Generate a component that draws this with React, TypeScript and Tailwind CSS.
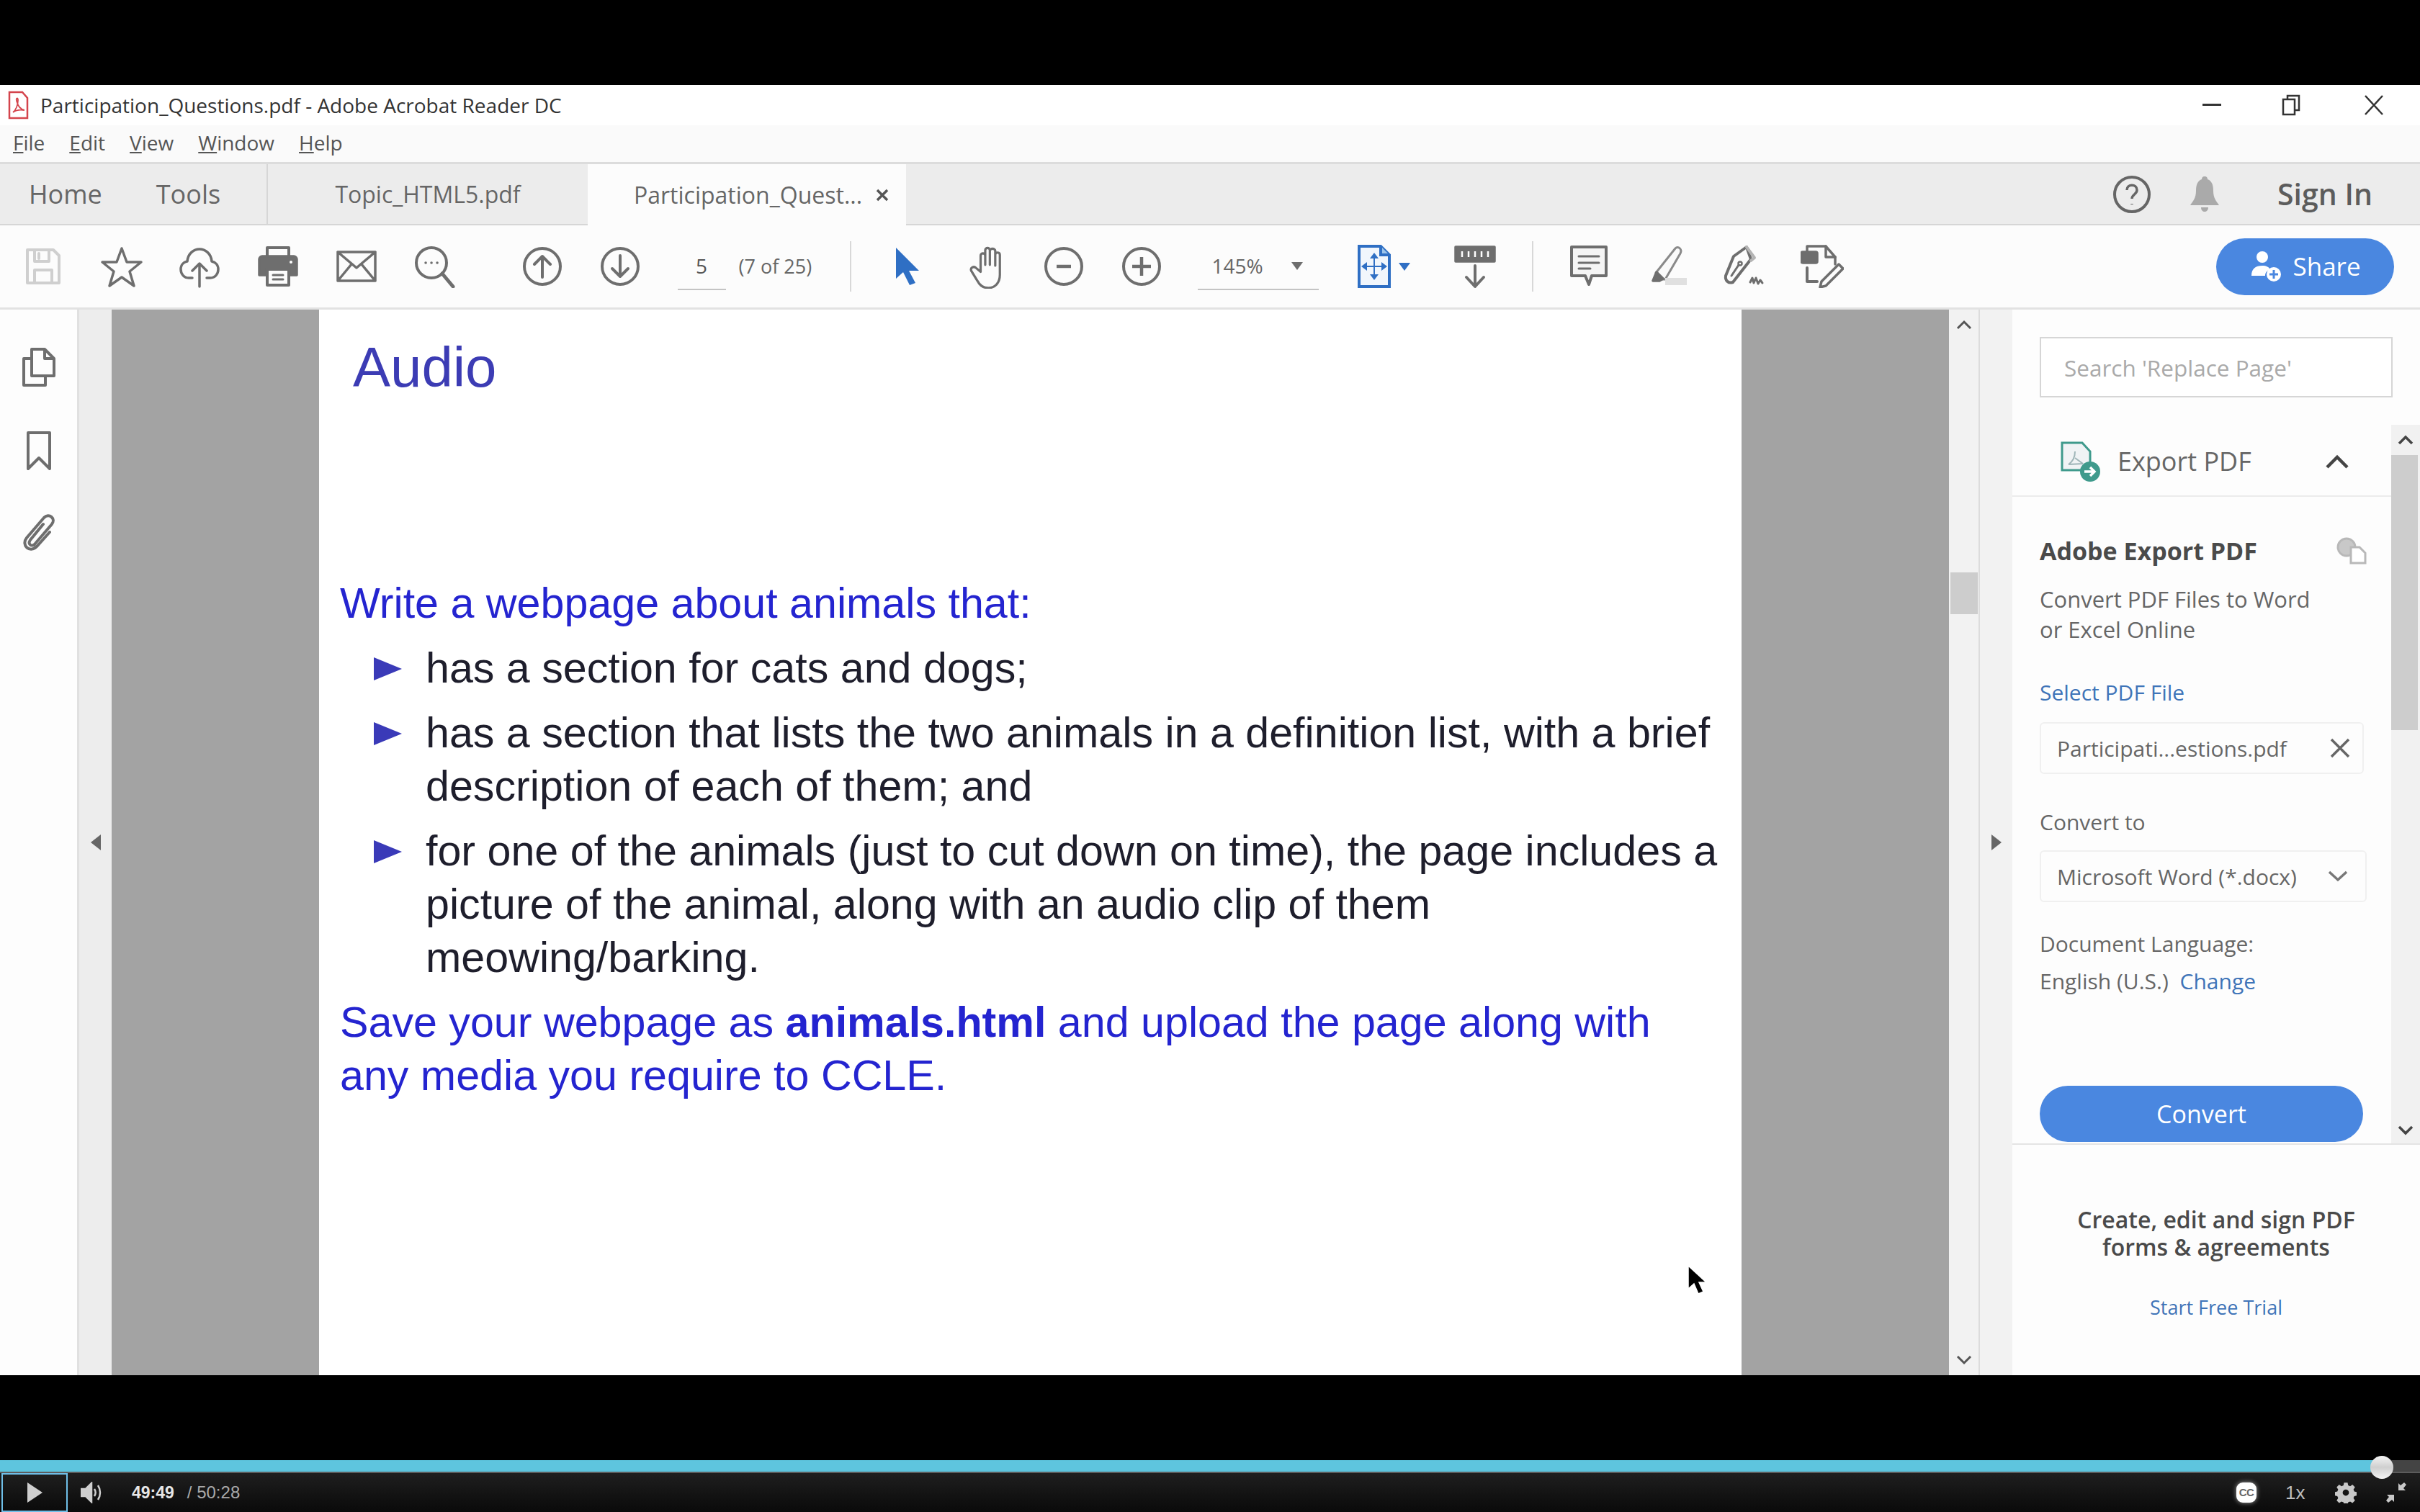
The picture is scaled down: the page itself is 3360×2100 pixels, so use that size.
import type { ReactNode } from "react";

const G = "#6e6e6e";

function Ico({ w = 60, h = 60, vb, children }: { w?: number; h?: number; vb?: string; children: ReactNode }) {
  return (
    <svg width={w} height={h} viewBox={vb ?? `0 0 ${w} ${h}`} fill="none" stroke={G} strokeWidth={3.5} strokeLinejoin="round" strokeLinecap="round">
      {children}
    </svg>
  );
}

function Slot({ children, className = "w-[108px]" }: { children: ReactNode; className?: string }) {
  return <div className={`flex shrink-0 items-center justify-center ${className}`}>{children}</div>;
}

function SaveIcon() {
  return (
    <Ico>
      <g stroke="#cfcfcf" strokeWidth={4}>
        <path d="M8 7h36l8 8v38H8z" />
        <path d="M18 7v16h20V7M18 53V35h24v18M24 12v7" />
      </g>
    </Ico>
  );
}
function StarIcon() {
  return <Ico><path d="M30 5l7 19h20L41 37l6 20-17-12-17 12 6-20L3 24h20z" /></Ico>;
}
function CloudIcon() {
  return <Ico><path d="M20 46H15C8 46 4 40 4 34c0-6 4-10 9-11 1-11 9-17 17-17s16 6 17 17c5 1 9 5 9 11 0 6-4 12-11 12h-5M30 58V27M20 36l10-10 10 10" /></Ico>;
}
function PrintIcon() {
  return (
    <Ico>
      <path d="M15 16V4h30v12" strokeWidth={4} />
      <path d="M4 20c0-2 2-4 4-4h44c2 0 4 2 4 4v22H46v-8H14v8H4z" fill={G} stroke={G} />
      <path d="M15 34h30v22H15z" strokeWidth={4} />
      <path d="M23 42h14M23 48h14" strokeWidth={3} />
      <circle cx="48" cy="24" r="2" fill="#fff" stroke="none" />
    </Ico>
  );
}
function MailIcon() {
  return <Ico><path d="M4 10h52v40H4zM4 10l26 22 26-22M4 50l19-23M56 50L37 27" /></Ico>;
}
function SearchIcon() {
  return (
    <Ico>
      <circle cx="26" cy="25" r="21" strokeWidth={4} />
      <path d="M41 40l15 18" strokeWidth={5} />
      <path d="M18 25h.1M26 25h.1M34 25h.1" strokeWidth={3.5} />
    </Ico>
  );
}
function CircleArrow({ up }: { up: boolean }) {
  return (
    <Ico>
      <circle cx="30" cy="30" r="25" strokeWidth={4} />
      {up ? <path d="M30 45V17M19 27l11-11 11 11" strokeWidth={4} /> : <path d="M30 15v28M19 33l11 11 11-11" strokeWidth={4} />}
    </Ico>
  );
}
function PointerIcon() {
  return (
    <svg width="42" height="54" viewBox="0 0 42 54">
      <path d="M4 1l32 32H22l9 17-8 3-9-18-10 9z" fill="#2f6fc4" />
    </svg>
  );
}
function HandIcon() {
  return (
    <Ico w={56} h={62} vb="4 1 44 58">
      <path d="M19 37V16c0-4 6-4 6 0v12-19c0-4 6-4 6 0v19-18c0-4 7-4 7 0v19-14c0-4 6-4 6 0v26c0 10-6 17-15 17-7 0-11-3-14-9l-8-13c-2-4 3-7 6-4z" strokeWidth={3} />
    </Ico>
  );
}
function ZoomCircle({ plus }: { plus: boolean }) {
  return (
    <Ico>
      <circle cx="30" cy="30" r="25" strokeWidth={4} />
      <path d={plus ? "M17 30h26M30 17v26" : "M20 30h20"} strokeWidth={4.5} strokeLinecap="butt" />
    </Ico>
  );
}
function PageFitIcon() {
  return (
    <svg width="48" height="62" viewBox="0 0 48 62" fill="none" stroke="#2f6fc4" strokeWidth="4">
      <path d="M3 3h30l12 12v44H3z" fill="#f1f6fc" />
      <path d="M33 3v12h12" fill="#9cc4ea" />
      <path d="M24 15v32M9 31h30" strokeWidth="2" />
      <path d="M24 12l-6 8h12zM24 50l-6-8h12zM6 31l8-6v12zM42 31l-8-6v12z" fill="#2f6fc4" stroke="none" />
    </svg>
  );
}
function ReadIcon() {
  return (
    <Ico w={60} h={62}>
      <rect x="3" y="4" width="54" height="20" fill={G} stroke={G} />
      <path d="M12 10v8M21 10v8M30 10v8M39 10v8M48 10v8" stroke="#fff" strokeWidth={2.5} strokeLinecap="butt" />
      <path d="M30 30v28M18 46l12 13 12-13" strokeWidth={4} />
    </Ico>
  );
}
function CommentIcon() {
  return (
    <Ico>
      <path d="M6 3h48v40H34l-4 12-5-12H6z" strokeWidth={4} fill="#f5f5f5" />
      <path d="M16 16h28M16 25h28M16 33h16" strokeWidth={3} />
    </Ico>
  );
}
function HighlightIcon() {
  return (
    <Ico>
      <path d="M28 48H20l-5-9L42 5c4-4 10 1 7 7z" fill="#fafafa" strokeWidth={3} stroke="#8a8a8a" />
      <path d="M11 50l5-12 9 9-5 3z" fill={G} />
      <path d="M28 46h30v10H28z" fill="#e0e0e0" stroke="none" />
    </Ico>
  );
}
function SignIcon() {
  return (
    <Ico>
      <path d="M33 3l6 17-25 32c-6 2-11-2-10-9l11-27z" strokeWidth={4} />
      <path d="M33 3l11 15-5 4" strokeWidth={4} stroke="#b4b4b4" />
      <path d="M12 43l10-15" strokeWidth={3} />
      <circle cx="24" cy="26" r="2.500" strokeWidth={2.5} />
      <path d="M38 52l3-6 2 7 3-7 3 8 3-5 3 4" strokeWidth={3} />
    </Ico>
  );
}
function EditPdfIcon() {
  return (
    <Ico>
      <path d="M9 9V2h26l13 15v10" strokeWidth={3.5} />
      <path d="M35 2v15h13" strokeWidth={3.5} />
      <rect x="1" y="10" width="22" height="15" rx="2" fill={G} />
      <path d="M9 32v19h14" strokeWidth={4} />
      <path d="M53 27l6 6-24 24-8 2 2-8z" strokeWidth={3.5} />
    </Ico>
  );
}
function Caret({ color = "#6e6e6e" }: { color?: string }) {
  return <div className="h-0 w-0 border-x-[8px] border-t-[11px] border-x-transparent" style={{ borderTopColor: color }} />;
}
function PdfLogo() {
  return (
    <svg width="30" height="40" viewBox="0 0 30 40" fill="none" stroke="#d4444c" strokeWidth="2.5">
      <path d="M3 2h18l7 8v28H3z" />
      <path d="M8 30c4-3 7-10 7-17 0-4-3-3-2 1 2 8 6 12 11 13-6-1-12 0-16 3z" strokeWidth="1.8" />
    </svg>
  );
}

function Toolbar() {
  return (
    <div className="flex h-[117px] items-center border-b-[3px] border-[#e2e2e2] bg-[#fcfcfc] pl-[6px]">
      <Slot className="w-[108.6px]"><SaveIcon /></Slot>
      <Slot className="w-[108.6px]"><StarIcon /></Slot>
      <Slot className="w-[108.6px]"><CloudIcon /></Slot>
      <Slot className="w-[108.6px]"><PrintIcon /></Slot>
      <Slot className="w-[108.6px]"><MailIcon /></Slot>
      <Slot className="w-[108.6px]"><SearchIcon /></Slot>
      <Slot className="ml-[41px] w-[108px]"><CircleArrow up /></Slot>
      <Slot><CircleArrow up={false} /></Slot>
      <div className="ml-[26px] flex h-[66px] w-[67px] items-center justify-center border-b-2 border-[#c4c4c4] text-[28px] text-[#555]">5</div>
      <div className="ml-[18px] w-[103px] whitespace-nowrap text-[27px] text-[#666]">(7 of 25)</div>
      <div className="ml-[51px] h-[70px] w-[2px] bg-[#d8d8d8]" />
      <Slot className="ml-[25px] w-[108px]"><PointerIcon /></Slot>
      <Slot><HandIcon /></Slot>
      <Slot><ZoomCircle plus={false} /></Slot>
      <Slot><ZoomCircle plus /></Slot>
      <div className="ml-[24px] flex h-[66px] w-[168px] items-center border-b-2 border-[#c4c4c4] pl-[20px] text-[28px] text-[#666]">
        <span className="w-[110px]">145%</span>
        <Caret />
      </div>
      <Slot className="ml-[47px] w-[60px]"><PageFitIcon /></Slot>
      <div className="ml-[4px] w-[18px]"><Caret color="#2f6fc4" /></div>
      <Slot className="ml-[58px] w-[60px]"><ReadIcon /></Slot>
      <div className="ml-[49px] h-[70px] w-[2px] bg-[#d8d8d8]" />
      <Slot className="ml-[23px] w-[108px]"><CommentIcon /></Slot>
      <Slot><HighlightIcon /></Slot>
      <Slot><SignIcon /></Slot>
      <Slot><EditPdfIcon /></Slot>
      <div className="ml-auto mr-[36px] flex h-[79px] w-[247px] items-center justify-center gap-[14px] rounded-full bg-[#4a87e0] text-[35px] font-medium text-white">
        <svg width="46" height="46" viewBox="0 0 46 46" fill="#fff">
          <circle cx="18" cy="10" r="8" />
          <path d="M3 36c0-10 6-14 15-14 6 0 9 2 11 5-5 2-7 5-7 9z" />
          <circle cx="34" cy="34" r="10" />
          <path d="M34 28v12M28 34h12" stroke="#4a87e0" strokeWidth="3" />
        </svg>
        <span>Share</span>
      </div>
    </div>
  );
}

function Bullet({ children }: { children: ReactNode }) {
  return (
    <div className="mt-[16px] flex">
      <div className="ml-[47px] mt-[22px] h-0 w-0 shrink-0 border-y-[16px] border-l-[39px] border-y-transparent border-l-[#3a3ab8]" />
      <div className="ml-[33px] text-[#1e1e2c]">{children}</div>
    </div>
  );
}

function PdfPage() {
  return (
    <div className="w-[1975px] shrink-0 bg-white pl-[29px] pr-[20px] font-['Liberation_Sans',sans-serif] text-[59.2px] leading-[74px]">
      <div className="ml-[18px] pt-[34px] text-[78px] leading-[92px] text-[#3c3cb4]">Audio</div>
      <div className="mt-[245px] text-[#2424d0]">Write a webpage about animals that:</div>
      <Bullet>has a section for cats and dogs;</Bullet>
      <Bullet>has a section that lists the two animals in a definition list, with a brief description of each of them; and</Bullet>
      <Bullet>for one of the animals (just to cut down on time), the page includes a picture of the animal, along with an audio clip of them meowing/barking.</Bullet>
      <div className="mt-[16px] text-[#2424d0]">
        Save your webpage as <b>animals.html</b> and upload the page along with
        <br />
        any media you require to CCLE.
      </div>
    </div>
  );
}

function SidePane() {
  return (
    <div className="flex w-[566px] shrink-0 flex-col bg-[#fdfdfd] font-['Open_Sans',sans-serif] text-[30px] text-[#666]">
      <div className="mx-[38px] mt-[38px] flex h-[84px] w-[490px] items-center border-2 border-[#d6d6d6] bg-white pl-[32px] pt-[2px] text-[31.5px] text-[#aaa]">
        Search 'Replace Page'
      </div>
      <div className="mt-[38px] flex h-[1000px] border-b-2 border-[#e4e4e4]">
        <div className="w-[526px] shrink-0">
          <div className="flex h-[100px] items-center border-b-2 border-[#ececec] pl-[66px] pt-[3px]">
            <svg width="58" height="58" viewBox="0 0 58 58" fill="none" stroke="#3f9a8c" strokeWidth="3">
              <path d="M3 3h28l11 12v26H3z" fill="#f0f3f5" />
              <path d="M12 33c6-4 9-11 9-18M21 24l11 8M12 33l20-1" stroke="#9fb5b8" strokeWidth="2" />
              <circle cx="42" cy="43" r="14" fill="#3f9a8c" stroke="none" />
              <path d="M34 43h14M42 37l6 6-6 6" stroke="#fff" strokeWidth="3.5" />
            </svg>
            <span className="ml-[22px] w-[288px] text-[36px] text-[#666]">Export PDF</span>
            <svg width="34" height="22" viewBox="0 0 34 22" fill="none" stroke="#444" strokeWidth="4.5"><path d="M3 19L17 5l14 14" /></svg>
          </div>
          <div className="pl-[38px]">
            <div className="mt-[55px] flex items-center">
              <span className="w-[412px] text-[34px] font-bold leading-[40px] text-[#4a4a4a]">Adobe Export PDF</span>
              <svg width="42" height="38" viewBox="0 0 42 38" fill="none" stroke="#b8b8b8" strokeWidth="3">
                <circle cx="14" cy="14" r="12" fill="#c8c8c8" />
                <path d="M20 14h12l8 8v14H20z" fill="#fff" />
              </svg>
            </div>
            <div className="mt-[26px] w-[420px] text-[31px] leading-[42px]">
              Convert PDF Files to Word
              <br />
              or Excel Online
            </div>
            <div className="mt-[46px] leading-[42px] text-[#3f74b8]">Select PDF File</div>
            <div className="mt-[20px] flex h-[72px] w-[450px] items-center justify-between rounded-[6px] border-2 border-[#f0f0f0] pl-[22px] pr-[16px]">
              <span>Participati...estions.pdf</span>
              <svg width="30" height="30" viewBox="0 0 30 30" stroke="#666" strokeWidth="3.5"><path d="M3 3l24 24M27 3L3 27" /></svg>
            </div>
            <div className="mt-[46px] leading-[42px]">Convert to</div>
            <div className="mt-[18px] flex h-[72px] w-[454px] items-center justify-between rounded-[6px] border-2 border-[#f0f0f0] pl-[22px] pr-[24px]">
              <span>Microsoft Word (*.docx)</span>
              <svg width="28" height="16" viewBox="0 0 28 16" fill="none" stroke="#777" strokeWidth="3.5"><path d="M2 2l12 11L26 2" /></svg>
            </div>
            <div className="mt-[32px] leading-[52px]">
              Document Language:
              <br />
              English (U.S.) <span className="ml-[8px] text-[#3f74b8]">Change</span>
            </div>
            <div className="mt-[119px] flex h-[78px] w-[449px] items-center justify-center rounded-full bg-[#4a87e0] text-[34px] text-white">Convert</div>
          </div>
        </div>
        <div className="flex w-[40px] shrink-0 flex-col bg-[#f1f1f1]">
          <div className="flex h-[42px] items-center justify-center">
            <svg width="22" height="14" viewBox="0 0 22 14" fill="none" stroke="#444" strokeWidth="3.5"><path d="M2 12l9-9 9 9" /></svg>
          </div>
          <div className="mr-[3px] h-[382px] bg-[#cdcdcd]" />
          <div className="mt-auto flex h-[36px] items-center justify-center">
            <svg width="22" height="14" viewBox="0 0 22 14" fill="none" stroke="#444" strokeWidth="3.5"><path d="M2 2l9 9 9-9" /></svg>
          </div>
        </div>
      </div>
      <div className="pt-[85px] text-center">
        <div className="text-[32px] font-semibold leading-[38px] text-[#4a4a4a]">
          Create, edit and sign PDF
          <br />
          forms &amp; agreements
        </div>
        <div className="mt-[45px] text-[27px] text-[#3f74b8]">Start Free Trial</div>
      </div>
    </div>
  );
}

function Player() {
  return (
    <div className="relative font-['Liberation_Sans',sans-serif]">
      <div className="flex h-[16px] bg-[#444]">
        <div className="w-[3307px] bg-[#5ec5de]" />
      </div>
      <div className="absolute left-[3291px] top-[-6px] h-[32px] w-[32px] rounded-full bg-gradient-to-b from-[#f4f4f4] via-[#cfcfcf] to-[#f4f4f4]" />
      <div className="h-[2px] bg-[#5c5c5c]" />
      <div className="flex h-[54px] items-center bg-gradient-to-b from-[#1f1f1f] to-[#0a0a0a]">
        <div className="ml-[2px] flex h-[54px] w-[92px] items-center justify-center border-2 border-[#6fbfe8]">
          <div className="h-0 w-0 border-y-[14px] border-l-[21px] border-y-transparent border-l-[#cfcfcf]" />
        </div>
        <svg className="ml-[18px]" width="32" height="30" viewBox="0 0 32 30" fill="none" stroke="#cfcfcf" strokeWidth="2.5">
          <path d="M1 10h6l8-8v26l-8-8H1z" fill="#cfcfcf" />
          <path d="M19 10c2 3 2 7 0 10M24 5c4 6 4 14 0 20" />
        </svg>
        <span className="ml-[39px] text-[23px] font-bold text-[#e6e6e6]">49:49</span>
        <span className="ml-[18px] text-[24px] text-[#a9a9a9]">/ 50:28</span>
        <div className="ml-auto flex h-[28px] w-[28px] items-center justify-center rounded-[9px] bg-white text-[15px] font-bold tracking-[-0.5px] text-[#666] shadow-[0_0_6px_rgba(255,255,255,0.6)]">CC</div>
        <span className="ml-[40px] w-[30px] text-[26px] text-[#bdbdbd]">1x</span>
        <svg className="ml-[39px]" width="30" height="30" viewBox="0 0 24 24" fill="#c8c8c8">
          <path d="M10 1h4l.6 3 2.200.9 2.600-1.700 2.800 2.800-1.700 2.600.9 2.200 3 .6v4l-3 .6-.9 2.200 1.700 2.600-2.800 2.800-2.600-1.700-2.200.9-.6 3h-4l-.6-3-2.200-.9-2.600 1.700-2.800-2.800 1.700-2.600-.9-2.200-3-.6v-4l3-.6.9-2.200-1.700-2.600 2.800-2.800 2.600 1.700 2.200-.9zM12 8.500a3.500 3.500 0 100 7 3.500 3.500 0 000-7z" fillRule="evenodd" />
        </svg>
        <svg className="ml-[40px] mr-[18px]" width="30" height="30" viewBox="0 0 30 30" fill="#c8c8c8">
          <path d="M18 2l3 3 5-4 3 3-4 5 3 3H18zM12 28l-3-3-5 4-3-3 4-5-3-3h10z" />
        </svg>
      </div>
    </div>
  );
}

export default function App() {
  return (
    <div className="relative flex h-[2100px] w-[3360px] flex-col overflow-hidden bg-black font-['Open_Sans',sans-serif]">
      <div className="h-[118px] shrink-0" />

      <div className="flex h-[1792px] shrink-0 flex-col bg-white">
        <div className="flex h-[56px] items-center bg-white pl-[10px]">
          <PdfLogo />
          <span className="ml-[16px] text-[28px] text-[#333]">Participation_Questions.pdf - Adobe Acrobat Reader DC</span>
          <svg className="ml-auto mr-[84px]" width="26" height="4"><rect width="26" height="3" fill="#333" /></svg>
          <svg className="mr-[88px]" width="26" height="30" viewBox="0 0 26 30" fill="none" stroke="#333" strokeWidth="2.5"><path d="M8 7V2h16v20h-6M2 7h16v21H2z" /></svg>
          <svg className="mr-[50px]" width="28" height="30" viewBox="0 0 28 30" stroke="#333" strokeWidth="2.5"><path d="M2 2l24 26M26 2L2 28" /></svg>
        </div>
        <div className="flex h-[51px] items-center gap-[34px] bg-[#fafafa] pb-[3px] pl-[18px] text-[28px] text-[#555]">
          <span><u>F</u>ile</span>
          <span><u>E</u>dit</span>
          <span><u>V</u>iew</span>
          <span><u>W</u>indow</span>
          <span><u>H</u>elp</span>
        </div>
        <div className="flex h-[88px] border-t-[3px] border-[#dcdcdc] text-[36px] text-[#666]">
          <div className="flex w-[372px] items-center gap-[75px] border-b-2 border-r-2 border-[#d6d6d6] bg-[#ececec] pl-[40px]">
            <span>Home</span>
            <span>Tools</span>
          </div>
          <div className="flex w-[444px] items-center justify-center border-b-2 border-[#d6d6d6] bg-[#ececec] text-[32px]">Topic_HTML5.pdf</div>
          <div className="flex w-[442px] items-center bg-[#fcfcfc] pl-[64px] text-[32px]">
            <span className="w-[336px] whitespace-nowrap">Participation_Quest...</span>
            <svg width="18" height="18" viewBox="0 0 18 18" stroke="#555" strokeWidth="3.5"><path d="M2 2l14 14M16 2L2 16" /></svg>
          </div>
          <div className="flex flex-1 items-center justify-end border-b-2 border-[#d6d6d6] bg-[#ececec] pr-[63px]">
            <svg width="54" height="54" viewBox="0 0 54 54" fill="none" stroke="#666" strokeWidth="4">
              <circle cx="27" cy="27" r="24" />
              <path d="M20 21c0-9 14-9 14 0 0 6-7 6-7 12M27 40v1" strokeWidth="3.5" />
            </svg>
            <svg className="ml-[52px]" width="44" height="52" viewBox="0 0 44 52" fill="#aaa">
              <path d="M22 1c3 0 4 2 4 4 6 2 8 8 8 16 0 10 4 14 8 20H2c4-6 8-10 8-20 0-8 2-14 8-16 0-2 1-4 4-4zM17 44h10c0 8-10 8-10 0z" />
            </svg>
            <span className="ml-[79px] w-[135px] whitespace-nowrap text-[41px] font-semibold text-[#5c5c5c]">Sign In</span>
          </div>
        </div>
        <Toolbar />

        <div className="flex min-h-0 flex-1 overflow-hidden">
          <div className="flex w-[110px] shrink-0 flex-col items-center gap-[60px] border-r-[3px] border-[#e0e0e0] bg-[#fdfdfd] pt-[52px]">
            <svg width="48" height="56" viewBox="0 0 48 56" fill="none" stroke={G} strokeWidth="4" strokeLinejoin="round">
              <path d="M14 12V3h18l13 13v24H14z" />
              <path d="M32 3v13h13" />
              <path d="M14 16H3v37h30V40" />
            </svg>
            <svg width="36" height="56" viewBox="0 0 36 56" fill="none" stroke={G} strokeWidth="4" strokeLinejoin="round">
              <path d="M3 3h30v50L18 38 3 53z" />
            </svg>
            <svg width="48" height="52" viewBox="0 0 48 52" fill="none" stroke={G} strokeWidth="4" strokeLinecap="round">
              <path d="M30 14L12 36c-4 6 2 10 6 6l24-28c6-8-4-16-11-9L7 33c-8 10 4 22 14 12l18-20" />
            </svg>
          </div>
          <div className="flex w-[45px] shrink-0 items-center justify-center bg-[#ededed]">
            <div className="h-0 w-0 border-y-[11px] border-r-[14px] border-y-transparent border-r-[#666]" />
          </div>
          <div className="w-[288px] shrink-0 bg-[#a3a3a3]" />
          <PdfPage />
          <div className="w-[288px] shrink-0 bg-[#a3a3a3]" />
          <div className="flex w-[43px] shrink-0 flex-col items-center border-r-2 border-[#dcdcdc] bg-[#f2f2f2]">
            <svg className="mt-[14px]" width="22" height="14" viewBox="0 0 22 14" fill="none" stroke="#555" strokeWidth="3"><path d="M2 12l9-9 9 9" /></svg>
            <div className="mt-[337px] h-[58px] w-[38px] bg-[#cdcdcd]" />
            <svg className="mb-[14px] mt-auto" width="22" height="14" viewBox="0 0 22 14" fill="none" stroke="#555" strokeWidth="3"><path d="M2 2l9 9 9-9" /></svg>
          </div>
          <div className="flex w-[45px] shrink-0 items-center justify-center bg-[#f2f2f2]">
            <div className="h-0 w-0 border-y-[11px] border-l-[14px] border-y-transparent border-l-[#666]" />
          </div>
          <SidePane />
        </div>
      </div>

      <div className="h-[118px] shrink-0" />
      <Player />

      {/* mouse cursor */}
      <svg className="absolute left-[2342px] top-[1757px]" width="28" height="42" viewBox="0 0 28 42">
        <path d="M2 1l0 32 8-7 6 14 7-3-6-13h10z" fill="#000" stroke="#fff" strokeWidth="1.5" />
      </svg>
    </div>
  );
}
